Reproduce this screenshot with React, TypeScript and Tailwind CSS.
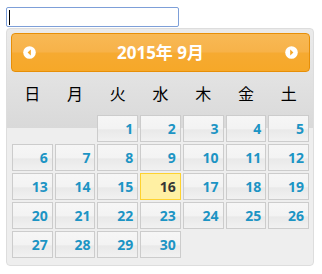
import React from "react";

const weekdays = ["日", "月", "火", "水", "木", "金", "土"];

function CircleArrow({ dir }: { dir: "w" | "e" }) {
  return (
    <svg width="13" height="13" viewBox="0 0 13 13">
      <circle cx="6.5" cy="6.5" r="6.3" fill="#ffffff" />
      {dir === "w" ? (
        <polygon points="7.8,3.5 7.8,9.5 4.6,6.5" fill="#f6a828" />
      ) : (
        <polygon points="5.2,3.5 5.2,9.5 8.4,6.5" fill="#f6a828" />
      )}
    </svg>
  );
}

export default function App() {
  const days: (number | null)[] = [null, null];
  for (let d = 1; d <= 30; d++) days.push(d);
  while (days.length % 7 !== 0) days.push(null);

  return (
    <div className="pl-[6px] pt-[7px] font-['Open_Sans','Noto_Sans_CJK_JP',sans-serif]">
      <div className="flex h-[20px] w-[173px] items-center rounded-[2px] border border-[#7d9fd8] bg-white pl-[2px]">
        <span className="block h-[15px] w-[1px] bg-black" />
      </div>

      <div className="mt-[1px] h-[238px] w-[308px] rounded-[4px] border border-[#dddddd] bg-[linear-gradient(#ebebeb_0px,#d9d9d9_99px,#eeeeee_99px,#eeeeee_100%)] pl-[4px] pr-[3px] pt-[4px]">
        <div className="flex h-[39px] items-center justify-between rounded-[4px] border border-[#e78f08] bg-[linear-gradient(#f8b955_0%,#f7b249_48%,#f6aa31_52%,#f6a828_100%)] px-[11px]">
          <CircleArrow dir="w" />
          <span className="text-[17px] font-bold leading-none text-white">2015年 9月</span>
          <CircleArrow dir="e" />
        </div>

        <div className="grid h-[42px] grid-cols-7 items-center">
          {weekdays.map((w) => (
            <div
              key={w}
              className="text-center font-['Noto_Sans_CJK_JP',sans-serif] text-[16px] leading-none text-black"
            >
              {w}
            </div>
          ))}
        </div>

        <div className="grid grid-cols-7">
          {days.map((d, i) => (
            <div key={i} className="h-[29px] p-[1px]">
              {d !== null && (
                <div
                  className={
                    d === 16
                      ? "flex h-[27px] items-center justify-end border border-[#fed22f] bg-[#fff0a3] pr-[4px] text-[14px] font-bold text-[#363636]"
                      : "flex h-[27px] items-center justify-end border border-[#cccccc] bg-[linear-gradient(#f6f6f6_0%,#f3f3f3_50%,#e9e9e9_56%,#f1f1f1_100%)] pr-[4px] text-[14px] font-bold text-[#1c94c4]"
                  }
                >
                  {d}
                </div>
              )}
            </div>
          ))}
        </div>
      </div>
    </div>
  );
}
